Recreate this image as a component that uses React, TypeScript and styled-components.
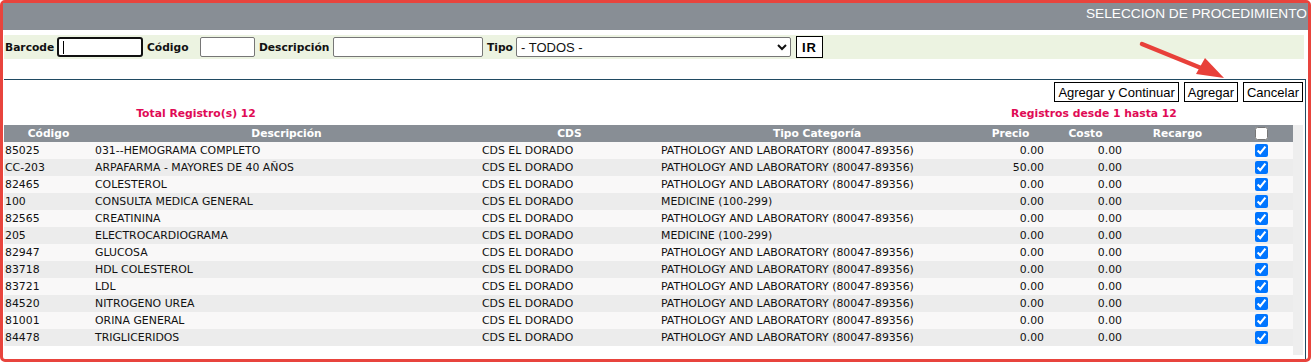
import React from "react";
import styled, { createGlobalStyle } from "styled-components";

interface Procedimiento {
  codigo: string;
  descripcion: string;
  cds: string;
  tipo: string;
  precio: string;
  costo: string;
}

const LAB = "PATHOLOGY AND LABORATORY (80047-89356)";
const MED = "MEDICINE (100-299)";
const CDS = "CDS EL DORADO";

const data: Procedimiento[] = [
  { codigo: "85025", descripcion: "031--HEMOGRAMA COMPLETO", cds: CDS, tipo: LAB, precio: "0.00", costo: "0.00" },
  { codigo: "CC-203", descripcion: "ARPAFARMA - MAYORES DE 40 AÑOS", cds: CDS, tipo: LAB, precio: "50.00", costo: "0.00" },
  { codigo: "82465", descripcion: "COLESTEROL", cds: CDS, tipo: LAB, precio: "0.00", costo: "0.00" },
  { codigo: "100", descripcion: "CONSULTA MEDICA GENERAL", cds: CDS, tipo: MED, precio: "0.00", costo: "0.00" },
  { codigo: "82565", descripcion: "CREATININA", cds: CDS, tipo: LAB, precio: "0.00", costo: "0.00" },
  { codigo: "205", descripcion: "ELECTROCARDIOGRAMA", cds: CDS, tipo: MED, precio: "0.00", costo: "0.00" },
  { codigo: "82947", descripcion: "GLUCOSA", cds: CDS, tipo: LAB, precio: "0.00", costo: "0.00" },
  { codigo: "83718", descripcion: "HDL COLESTEROL", cds: CDS, tipo: LAB, precio: "0.00", costo: "0.00" },
  { codigo: "83721", descripcion: "LDL", cds: CDS, tipo: LAB, precio: "0.00", costo: "0.00" },
  { codigo: "84520", descripcion: "NITROGENO UREA", cds: CDS, tipo: LAB, precio: "0.00", costo: "0.00" },
  { codigo: "81001", descripcion: "ORINA GENERAL", cds: CDS, tipo: LAB, precio: "0.00", costo: "0.00" },
  { codigo: "84478", descripcion: "TRIGLICERIDOS", cds: CDS, tipo: LAB, precio: "0.00", costo: "0.00" },
];

const columns = [89, 387, 179, 316, 71, 79, 105, 63];

const GlobalStyle = createGlobalStyle`
  body {
    margin: 0;
    background: #ffffff;
    font-family: "DejaVu Sans", sans-serif;
  }
`;

const Frame = styled.div`
  position: relative;
  box-sizing: border-box;
  width: 1311px;
  height: 362px;
  border: 3px solid #e8443d;
  border-radius: 5px;
  display: flex;
  flex-direction: column;
`;

const TitleBar = styled.div`
  height: 27px;
  background-color: #888e95;
  color: #ffffff;
  font-family: "Liberation Sans", Arial, sans-serif;
  font-size: 13.7px;
  line-height: 16px;
  text-align: right;
  padding: 3px 1px 0 0;
  box-sizing: border-box;
`;

const FilterBar = styled.div`
  margin: 5px 4px 0 1px;
  height: 24px;
  background-color: #ecf3e1;
  display: flex;
  align-items: center;
  padding-left: 1px;
`;

const Label = styled.span<{ $w: number }>`
  width: ${(p) => p.$w}px;
  font-size: 10.7px;
  font-weight: bold;
  color: #111;
`;

const TextInput = styled.input<{ $w: number }>`
  box-sizing: border-box;
  width: ${(p) => p.$w}px;
  height: 20px;
  margin: 0 4px 0 0;
  border: 1px solid #767676;
  border-radius: 2px;
  background: #fff;
  padding: 0 3px;
  font-family: "Liberation Sans", Arial, sans-serif;
  font-size: 13px;
`;

const FocusWrap = styled.span`
  position: relative;
  display: inline-flex;
  margin-right: 4px;
  &::after {
    content: "";
    position: absolute;
    left: 6px;
    top: 4px;
    width: 1px;
    height: 13px;
    background: #000;
  }
  > input {
    margin: 0;
    border: 2px solid #111;
    border-radius: 3px;
  }
`;

const Select = styled.select`
  box-sizing: border-box;
  width: 275px;
  height: 20px;
  margin-right: 5px;
  border: 1px solid #767676;
  border-radius: 2px;
  background: #fff;
  color: #111;
  font-family: "Liberation Sans", Arial, sans-serif;
  font-size: 13px;
`;

const Button = styled.button<{ $bold?: boolean }>`
  height: 20px;
  padding: 0 4px;
  border: 1px solid #000;
  border-radius: 0;
  background: #fff;
  color: #000;
  font-family: "Liberation Sans", Arial, sans-serif;
  font-size: 13px;
  font-weight: ${(p) => (p.$bold ? "bold" : "normal")};
  cursor: pointer;
`;

const GoButton = styled(Button)`
  height: 22px;
  padding: 0 5px;
  letter-spacing: 1px;
`;

const ResultBox = styled.div`
  margin: 20px 2px 0 1px;
  flex: 1;
  border-top: 1px solid #204a62;
  border-right: 1px solid #204a62;
  display: flex;
  flex-direction: column;
`;

const ButtonRow = styled.div`
  display: flex;
  justify-content: flex-end;
  gap: 5px;
  padding: 2px 2px 0 0;
  > button {
    padding: 0 3px;
  }
`;

const InfoRow = styled.div`
  height: 23px;
  display: flex;
  align-items: center;
  justify-content: space-between;
`;

const Info = styled.span<{ $w: number }>`
  width: ${(p) => p.$w}px;
  text-align: center;
  color: #e00a55;
  font-size: 10.8px;
  font-weight: bold;
`;

const TableArea = styled.div`
  display: flex;
  height: 230px;
`;

const ScrollTrack = styled.div`
  width: 10px;
  background-color: #eeeeee;
`;

const Table = styled.table`
  width: 1289px;
  table-layout: fixed;
  border-collapse: collapse;
  align-self: flex-start;
  font-size: 10.9px;
`;

const HeadCell = styled.th`
  height: 17px;
  padding: 0;
  background-color: #888e95;
  color: #ffffff;
  font-weight: bold;
  font-size: 10.7px;
  text-align: center;
  vertical-align: middle;
  > input {
    margin: 0;
    vertical-align: middle;
  }
`;

const Row = styled.tr<{ $alt: boolean }>`
  height: 17px;
  background-color: ${(p) => (p.$alt ? "#ececec" : "#f9f8f8")};
`;

const Cell = styled.td<{ $align?: string }>`
  padding: 0 2px;
  color: #111;
  white-space: nowrap;
  overflow: hidden;
  text-align: ${(p) => p.$align || "left"};
  vertical-align: middle;
  > input {
    margin: 0;
    vertical-align: middle;
  }
`;

const FirstCell = styled(Cell)`
  padding-left: 1px;
`;

const Arrow = styled.svg`
  position: absolute;
  left: 1132px;
  top: 35px;
  pointer-events: none;
`;

const App = () => {
  const rows = data.map((line, i) => (
    <Row key={line.codigo} $alt={i % 2 === 1}>
      <FirstCell>{line.codigo}</FirstCell>
      <Cell>{line.descripcion}</Cell>
      <Cell>{line.cds}</Cell>
      <Cell>{line.tipo}</Cell>
      <Cell $align="right">{line.precio}</Cell>
      <Cell $align="right" style={{ paddingRight: 3 }}>
        {line.costo}
      </Cell>
      <Cell></Cell>
      <Cell $align="center">
        <input type="checkbox" defaultChecked />
      </Cell>
    </Row>
  ));

  return (
    <>
      <GlobalStyle />
      <Frame>
        <TitleBar>SELECCION DE PROCEDIMIENTO</TitleBar>
        <FilterBar>
          <Label $w={52}>Barcode</Label>
          <FocusWrap>
            <TextInput $w={86} />
          </FocusWrap>
          <Label $w={53}>Código</Label>
          <TextInput $w={55} />
          <Label $w={74}>Descripción</Label>
          <TextInput $w={150} />
          <Label $w={29}>Tipo</Label>
          <Select defaultValue="">
            <option value="">- TODOS -</option>
          </Select>
          <GoButton $bold>IR</GoButton>
        </FilterBar>
        <ResultBox>
          <ButtonRow>
            <Button>Agregar y Continuar</Button>
            <Button>Agregar</Button>
            <Button>Cancelar</Button>
          </ButtonRow>
          <InfoRow>
            <Info $w={384}>Total Registro(s) 12</Info>
            <Info $w={422}>Registros desde 1 hasta 12</Info>
          </InfoRow>
          <TableArea>
            <Table>
              <colgroup>
                {columns.map((w, i) => (
                  <col key={i} style={{ width: w }} />
                ))}
              </colgroup>
              <thead>
                <tr>
                  <HeadCell>Código</HeadCell>
                  <HeadCell>Descripción</HeadCell>
                  <HeadCell>CDS</HeadCell>
                  <HeadCell>Tipo Categoría</HeadCell>
                  <HeadCell>Precio</HeadCell>
                  <HeadCell>Costo</HeadCell>
                  <HeadCell>Recargo</HeadCell>
                  <HeadCell>
                    <input type="checkbox" />
                  </HeadCell>
                </tr>
              </thead>
              <tbody>{rows}</tbody>
            </Table>
            <ScrollTrack />
          </TableArea>
        </ResultBox>
        <Arrow width="95" height="48" viewBox="1135 38 95 48">
          <line x1="1142" y1="44" x2="1206" y2="70" stroke="#e8403a" strokeWidth="4.5" strokeLinecap="round" />
          <polygon points="1224,78 1196,74 1205,58" fill="#e8403a" />
        </Arrow>
      </Frame>
    </>
  );
};

export default App;
